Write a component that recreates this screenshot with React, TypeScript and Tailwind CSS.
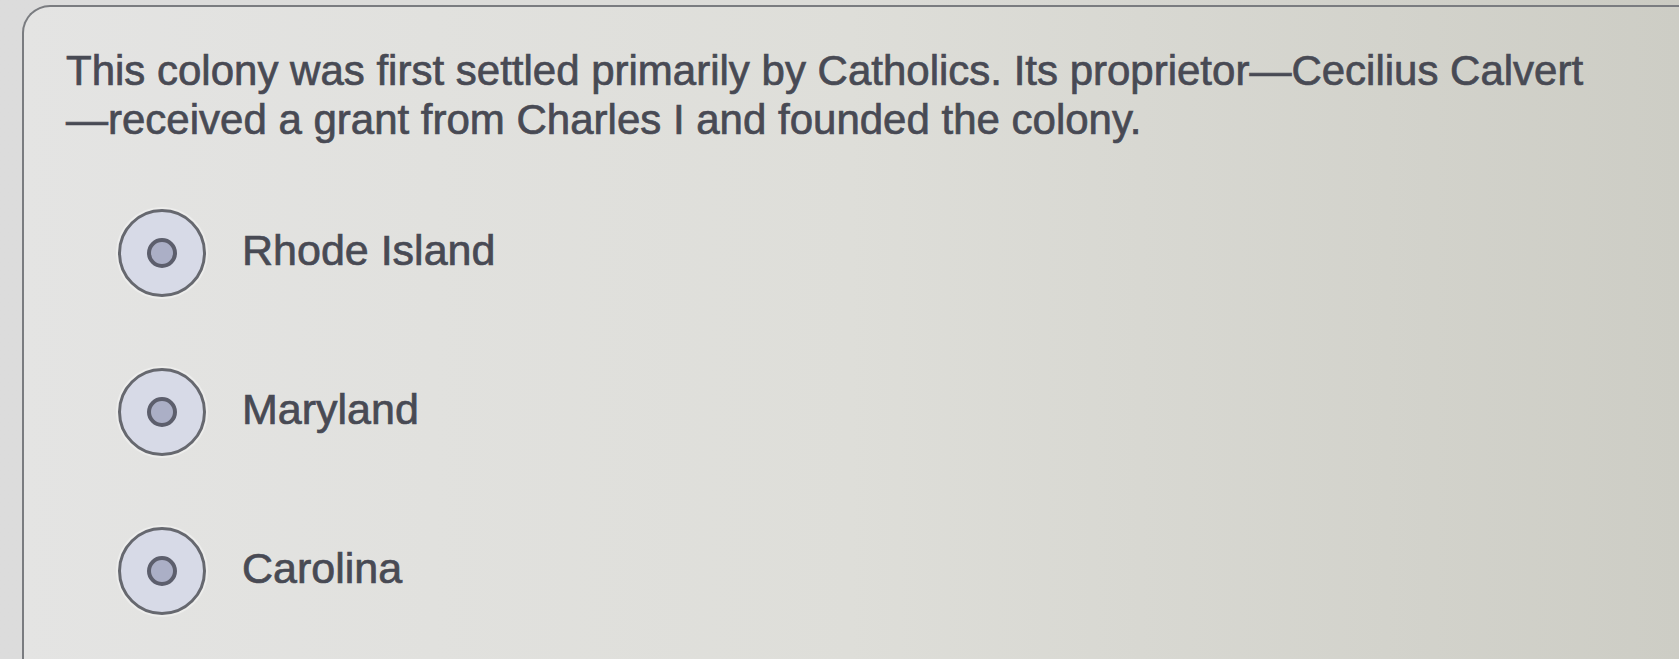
import React from "react";

const choices = ["Rhode Island", "Maryland", "Carolina"];

const RadioDot: React.FC = () => (
  <div className="w-[88px] h-[88px] shrink-0 rounded-full border-[3px] border-[#66686f] bg-[#d7dae7] flex items-center justify-center shadow-[0_0_0_2px_rgba(255,255,255,0.35)]">
    <div className="w-[30px] h-[30px] rounded-full border-[4px] border-[#5c5e6c] bg-[#abafc6]" />
  </div>
);

export default function App() {
  return (
    <div className="w-[1679px] h-[659px] overflow-hidden flex flex-col pt-[5px] pl-[22px] bg-gradient-to-r from-[#dcdcdc] via-[#dcdcd8] to-[#cbcbc3] font-['Liberation_Sans',Arial,sans-serif]">
      <div className="flex-1 border-t-2 border-l-2 border-[#7a7c80] rounded-tl-[28px] bg-gradient-to-r from-[#e4e4e3] via-[#deded9] to-[#cdcdc5] pt-[39px] pl-[42px]">
        <p className="text-[42px] leading-[49px] text-[#484a54] [-webkit-text-stroke:0.7px_#484a54]">
          This colony was first settled primarily by Catholics. Its proprietor{"\u2014"}Cecilius Calvert
          <br />
          {"\u2014"}received a grant from Charles I and founded the colony.
        </p>
        <div className="mt-[65px] ml-[52px] flex flex-col gap-[71px]">
          {choices.map((c) => (
            <div key={c} className="flex items-center gap-[36px]">
              <RadioDot />
              <span className="text-[43px] leading-[48px] text-[#484a54] [-webkit-text-stroke:0.7px_#484a54] -mt-[6px]">
                {c}
              </span>
            </div>
          ))}
        </div>
      </div>
    </div>
  );
}
